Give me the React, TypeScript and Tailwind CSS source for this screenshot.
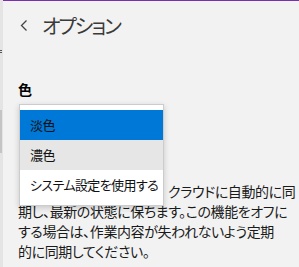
import React from "react";

const jp = "[font-family:'Noto_Sans_CJK_JP','Noto_Sans',sans-serif] [font-feature-settings:'palt']";

export default function App() {
  return (
    <div className={`relative flex w-[299px] h-[267px] overflow-hidden bg-[#f2f2f2] text-[#1a1a1a] ${jp}`}>
      {/* left neighbour pane edge */}
      <div className="flex w-[3px] shrink-0 flex-col bg-[#e4e4e4]">
        <div className="h-[50px]" />
        <div className="h-[1px] w-[2px] bg-[#555]" />
        <div className="h-[1px]" />
        <div className="h-[1px] w-[2px] bg-[#555]" />
        <div className="h-[57px]" />
        <div className="h-[43px] w-[2px] bg-[#c4c4c4]" />
      </div>

      {/* main */}
      <div className="flex min-w-0 flex-1 flex-col border-t border-[#7a2fb0] pl-[15px]">
        <div className="mt-[11px] flex h-[28px] items-center">
          <svg width="10" height="14" viewBox="0 0 10 14" className="ml-[1px] shrink-0">
            <polyline points="7.5,1.5 2.5,6.5 7.5,11.5" fill="none" stroke="#444" strokeWidth="1.3" />
          </svg>
          <span className="ml-[13px] text-[20px] leading-[28px] tracking-[-2px] text-[#3a3a3a]">オプション</span>
        </div>

        <div className="mt-[39px] text-[14px] font-bold leading-[20px] text-black">色</div>

        <p className="mt-[82px] text-[14px] leading-[20px] tracking-[-0.4px] text-[#1a1a1a] whitespace-nowrap">
          <span className="inline-block w-[150px] pl-[4px] align-bottom">OneNote はノートブック</span>
          クラウドに自動的に同
          <br />
          期し、最新の状態に保ちます。この機能をオフに
          <br />
          する場合は、作業内容が失われないよう定期
          <br />
          的に同期してください。
        </p>
      </div>

      {/* open combo box popup */}
      <div className="absolute left-[19px] top-[104px] w-[145px] border border-[#cccccc] bg-white pt-[5px] pb-[5px] shadow-[0_2px_6px_rgba(0,0,0,0.18)]">
        <div className="flex h-[30px] items-center bg-[#0078d7] pl-[10px] text-[13px] tracking-[-0.6px] text-[#111]">淡色</div>
        <div className="flex h-[30px] items-center bg-[#e6e6e6] pl-[10px] text-[13px] tracking-[-0.6px] text-[#111]">濃色</div>
        <div className="flex h-[30px] items-center bg-white pl-[10px] text-[13px] tracking-[-0.6px] text-[#111] whitespace-nowrap">システム設定を使用する</div>
      </div>
    </div>
  );
}
